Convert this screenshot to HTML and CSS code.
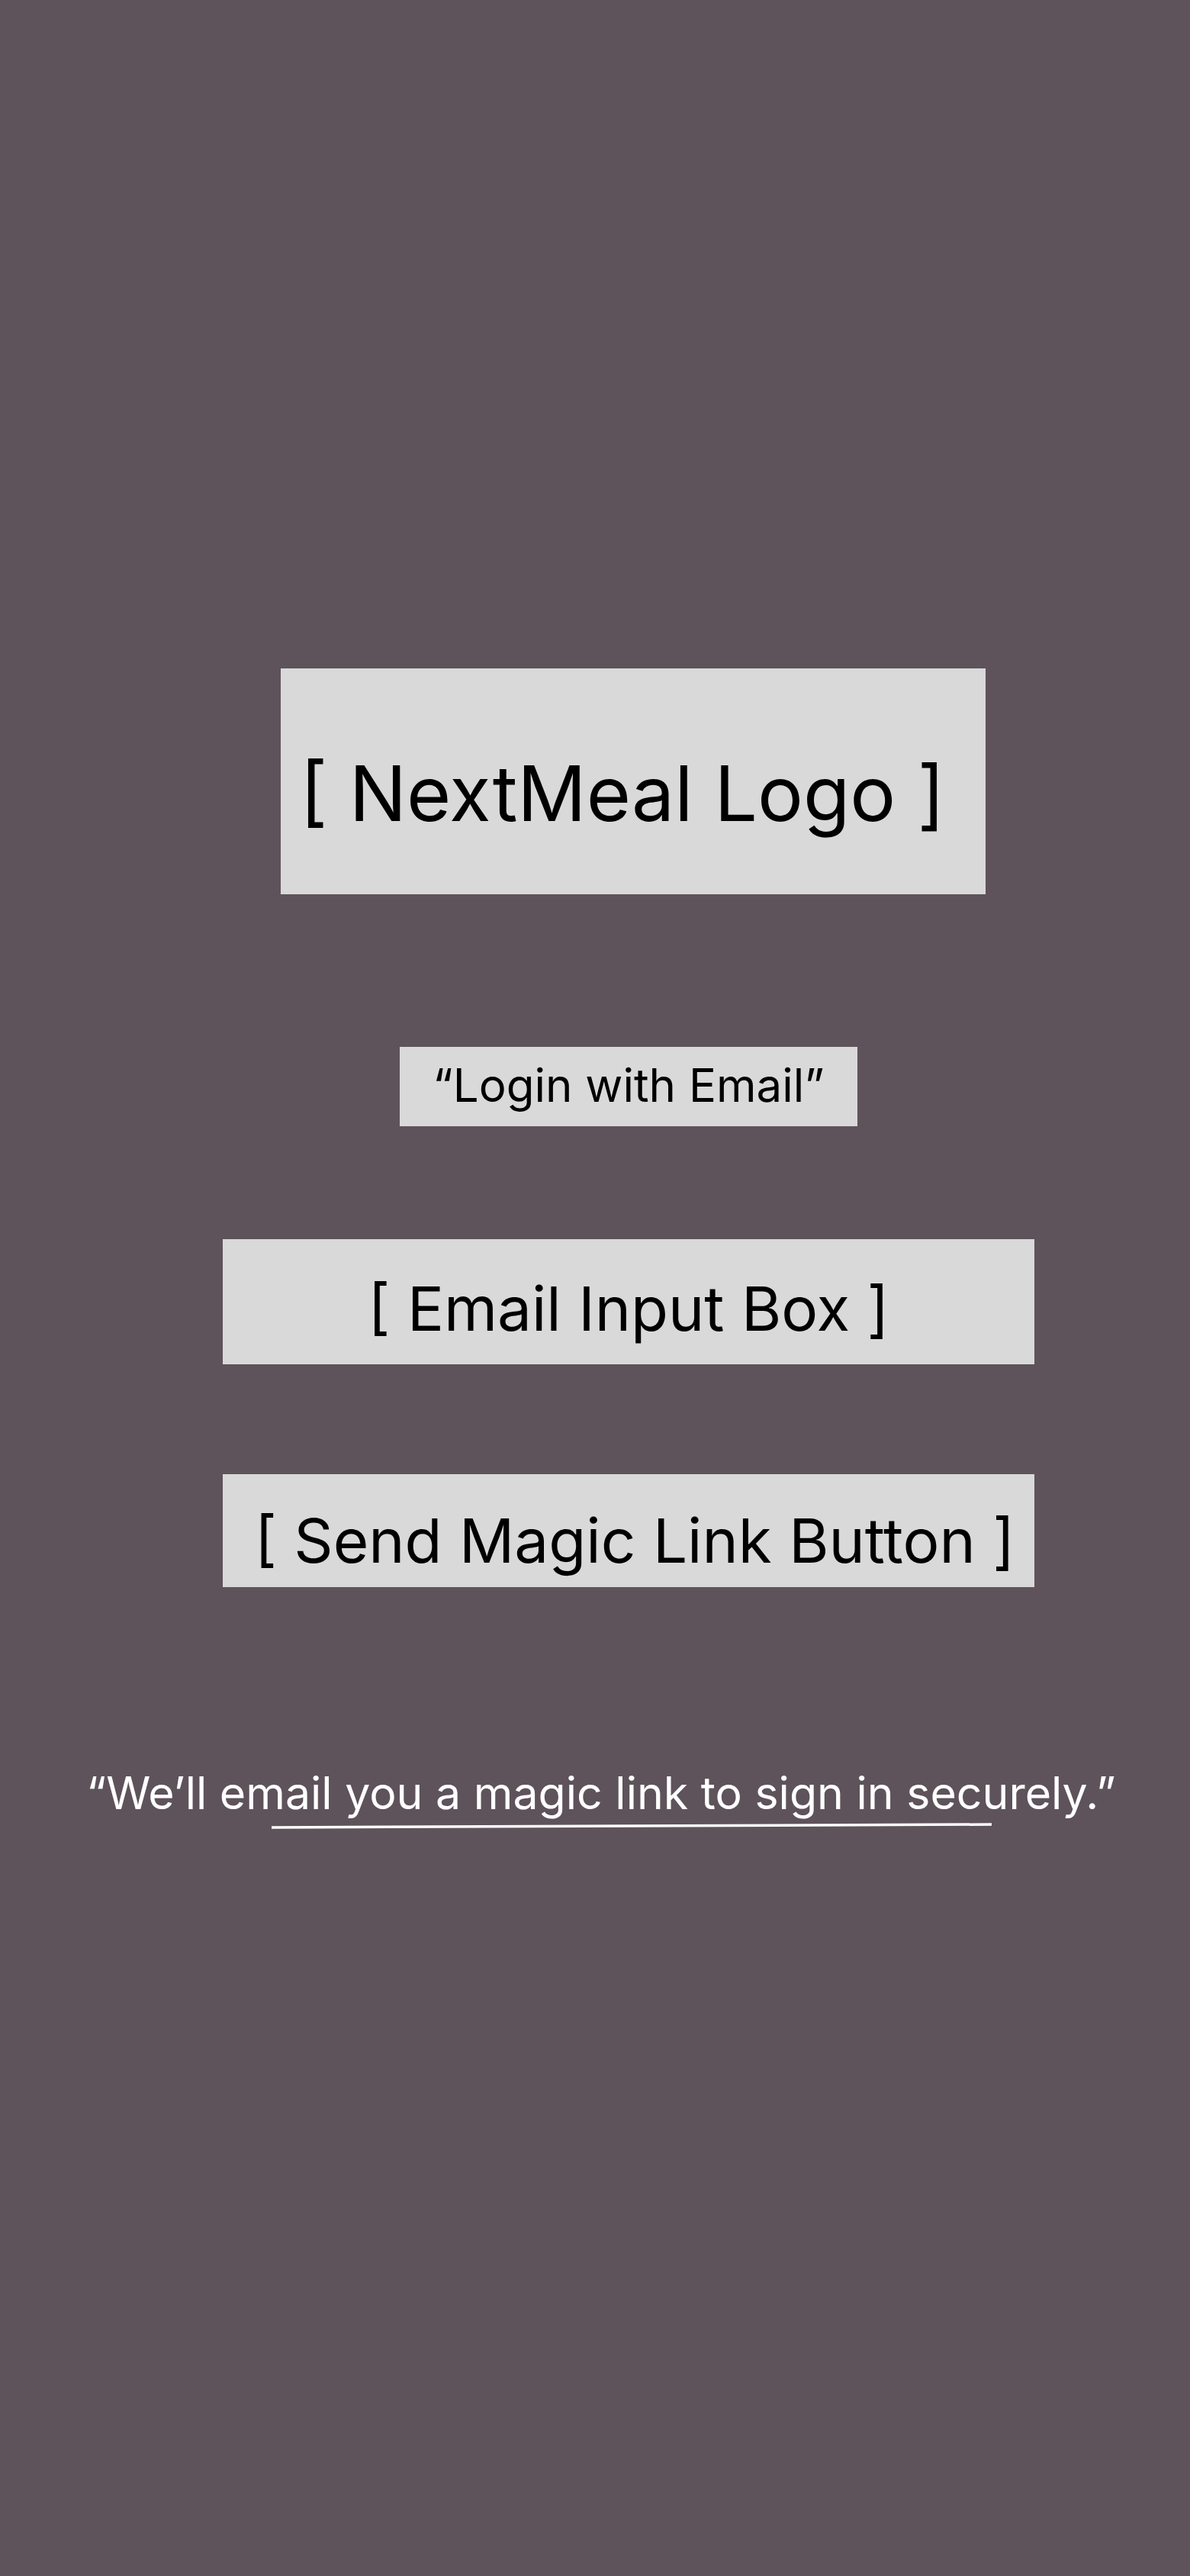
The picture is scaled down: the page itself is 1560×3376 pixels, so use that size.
FILE: index.html
```html
<!DOCTYPE html>
<html lang="en">
<head>
<meta charset="utf-8">
<title>NextMeal Login</title>
<link rel="stylesheet" href="styles.css">
</head>
<body>
<main class="screen">
  <div class="logo-box"><span class="logo-text">[ NextMeal Logo ]</span></div>
  <div class="title-box">“Login with Email”</div>
  <div class="input-box">[ Email Input Box ]</div>
  <div class="button-box">[ Send Magic Link Button ]</div>
  <p class="caption">“We’ll email you a magic link to sign in securely.”</p>
  <svg class="underline" width="944" height="8" viewBox="0 0 944 8"><line x1="0" y1="6" x2="944" y2="2" stroke="#ffffff" stroke-width="3.5"/></svg>
</main>
</body>
</html>
```
FILE: styles.css
```css
html, body {
  margin: 0;
  padding: 0;
  background: #5e535a;
}
.screen {
  min-height: 3376px;
  display: flex;
  flex-direction: column;
  align-items: flex-start;
  font-family: Inter, "Noto Sans", sans-serif;
  color: #000;
}
.logo-box, .title-box, .input-box, .button-box {
  background: #d9d9d9;
  box-sizing: border-box;
  line-height: 1;
  text-align: center;
  white-space: nowrap;
}
.logo-box {
  margin: 876px 0 0 368px;
  width: 924px;
  height: 296px;
  padding: 114px 28px 0 0;
  font-size: 100px;
}
.title-box {
  margin: 200px 0 0 524px;
  width: 600px;
  height: 104px;
  padding-top: 20px;
  font-size: 60px;
}
.input-box {
  margin: 148px 0 0 292px;
  width: 1064px;
  height: 164px;
  padding-top: 51px;
  font-size: 80px;
}
.button-box {
  margin: 144px 0 0 292px;
  width: 1064px;
  height: 148px;
  padding: 47px 0 0 16px;
  font-size: 80px;
}
.caption {
  margin: 240px 0 0 0;
  width: 1560px;
  box-sizing: border-box;
  padding-left: 16px;
  text-align: center;
  color: #fff;
  font-size: 59px;
  line-height: 1;
}
.underline {
  display: block;
  margin: 10px 0 0 356px;
}
```
